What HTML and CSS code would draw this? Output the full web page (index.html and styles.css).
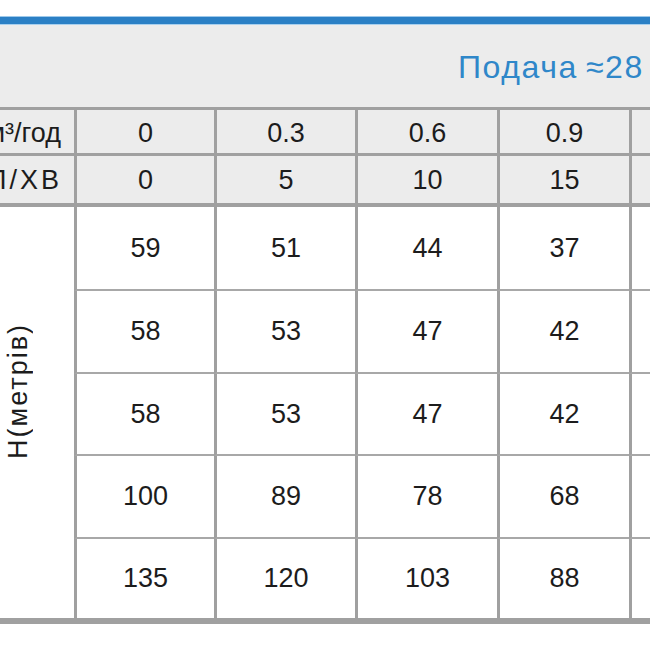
FILE: index.html
```html
<!DOCTYPE html>
<html lang="uk">
<head>
<meta charset="utf-8">
<link rel="stylesheet" href="styles.css">
</head>
<body>
<div class="page">
  <div class="bar"></div>
  <div class="title"><span class="title-text">Подача&thinsp;≈28</span></div>
  <div class="table">
    <div class="cell head label"><span>м³/год</span></div>
    <div class="cell head col">0</div>
    <div class="cell head col">0.3</div>
    <div class="cell head col">0.6</div>
    <div class="cell head col">0.9</div>
    <div class="cell head col"></div>

    <div class="cell head2 label label-caps"><span class="caps">Л/ХВ</span></div>
    <div class="cell head2 col">0</div>
    <div class="cell head2 col">5</div>
    <div class="cell head2 col">10</div>
    <div class="cell head2 col">15</div>
    <div class="cell head2 col"></div>

    <div class="side"><span class="vert">Н(метрів)</span></div>

    <div class="cell data col">59</div>
    <div class="cell data col">51</div>
    <div class="cell data col">44</div>
    <div class="cell data col">37</div>
    <div class="cell data col"></div>

    <div class="cell data col">58</div>
    <div class="cell data col">53</div>
    <div class="cell data col">47</div>
    <div class="cell data col">42</div>
    <div class="cell data col"></div>

    <div class="cell data col">58</div>
    <div class="cell data col">53</div>
    <div class="cell data col">47</div>
    <div class="cell data col">42</div>
    <div class="cell data col"></div>

    <div class="cell data col">100</div>
    <div class="cell data col">89</div>
    <div class="cell data col">78</div>
    <div class="cell data col">68</div>
    <div class="cell data col"></div>

    <div class="cell data last col">135</div>
    <div class="cell data last col">120</div>
    <div class="cell data last col">103</div>
    <div class="cell data last col">88</div>
    <div class="cell data last col"></div>
  </div>
</div>
</body>
</html>
```

FILE: styles.css
```css
html, body {
  margin: 0;
  padding: 0;
  background: #ffffff;
}
body {
  width: 650px;
  height: 650px;
  overflow: hidden;
  font-family: "Liberation Sans", Arial, sans-serif;
  color: #1c1c1c;
}
.page {
  padding-top: 16px;
  width: 800px;
}
.bar {
  height: 7px;
  background: #2b80c5;
  border-top: 1px solid #9ec9ea;
  border-bottom: 1px solid #a9d0ee;
}
.title {
  height: 82px;
  background: #ececec;
  box-sizing: border-box;
  padding-left: 458px;
  padding-top: 25px;
  white-space: nowrap;
}
.title-text {
  font-size: 32px;
  line-height: 34px;
  letter-spacing: 1.6px;
  color: #2f87c9;
}
.table {
  display: grid;
  grid-template-columns: 74px 140px 141px 142px 132px 170px;
  grid-template-rows: 46px 51px 84px 83px 82px 83px 79px;
  border-top: 3px solid #a0a0a0;
  border-bottom: 6px solid #a0a0a0;
}
.cell {
  box-sizing: border-box;
  display: flex;
  align-items: center;
  justify-content: center;
  font-size: 27px;
  white-space: nowrap;
}
.col {
  border-left: 3px solid #a0a0a0;
}
.head {
  background: #ececec;
  border-bottom: 3px solid #a0a0a0;
  padding-top: 3px;
}
.head2 {
  background: #ececec;
  border-bottom: 4px solid #a0a0a0;
  padding-top: 1px;
}
.label {
  justify-content: flex-end;
  padding-right: 13px;
}
.label-caps {
  padding-right: 15px;
}
.caps {
  letter-spacing: 3px;
  margin-right: -3px;
}
.data {
  background: #ffffff;
  border-bottom: 2px solid #a8a8a8;
}
.data.last {
  border-bottom: none;
}
.side {
  grid-column: 1;
  grid-row: 3 / span 5;
  background: #ffffff;
  display: flex;
  align-items: center;
  justify-content: center;
  padding-right: 37px;
  padding-bottom: 43px;
}
.vert {
  writing-mode: vertical-rl;
  transform: rotate(180deg);
  font-size: 27px;
  letter-spacing: 2px;
  white-space: nowrap;
}
```
